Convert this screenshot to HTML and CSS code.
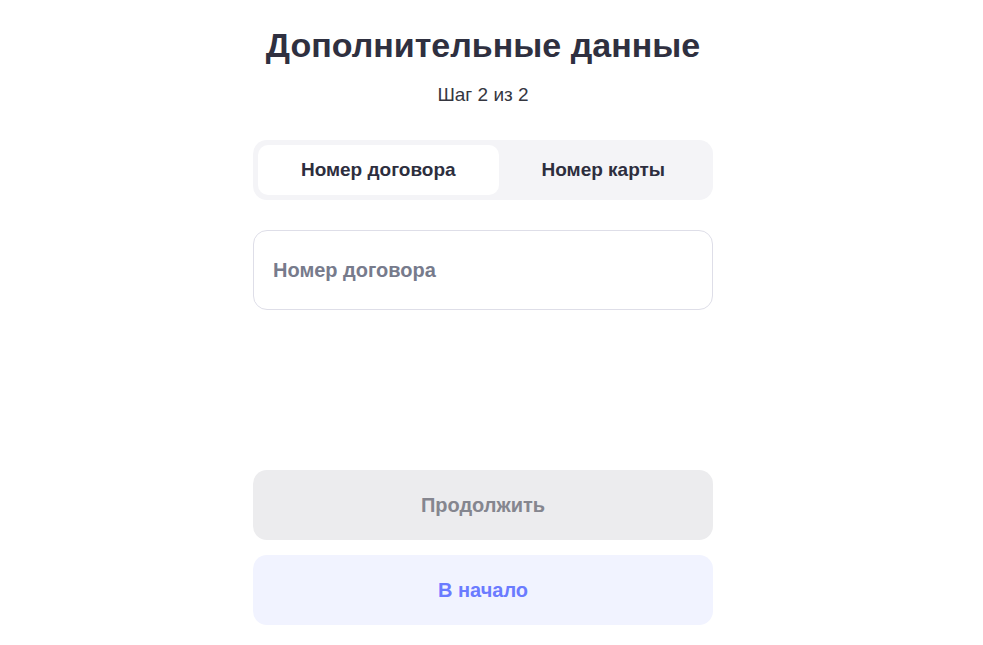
FILE: index.html
```html
<!DOCTYPE html>
<html lang="ru">
<head>
<meta charset="utf-8">
<title>Дополнительные данные</title>
<link rel="stylesheet" href="styles.css">
</head>
<body>
<div class="page">
  <main class="form">
    <h1 class="title">Дополнительные данные</h1>
    <p class="step">Шаг 2 из 2</p>
    <div class="tabs">
      <button class="tab tab-active">Номер договора</button>
      <button class="tab">Номер карты</button>
    </div>
    <input class="field" type="text" placeholder="Номер договора">
    <div class="spacer"></div>
    <button class="btn btn-primary" disabled>Продолжить</button>
    <button class="btn btn-secondary">В начало</button>
  </main>
</div>
</body>
</html>
```
FILE: styles.css
```css
html, body {
  margin: 0;
  padding: 0;
  background: #ffffff;
  font-family: "Liberation Sans", Arial, sans-serif;
}
.page {
  width: 966px;
}
.form {
  width: 460px;
  margin: 0 auto;
  display: flex;
  flex-direction: column;
  padding-top: 25px;
}
.title {
  margin: 0;
  font-size: 34px;
  line-height: 40px;
  font-weight: 700;
  color: #2f3040;
  text-align: center;
}
.step {
  margin: 18px 0 0;
  font-size: 19px;
  line-height: 24px;
  color: #35363f;
  text-align: center;
}
.tabs {
  margin-top: 33px;
  height: 60px;
  box-sizing: border-box;
  padding: 5px;
  background: #f4f4f7;
  border-radius: 14px;
  display: flex;
}
.tab {
  flex: 1 1 auto;
  border: 0;
  background: transparent;
  border-radius: 10px;
  font-family: inherit;
  font-size: 19px;
  font-weight: 700;
  color: #2d2e3e;
  cursor: pointer;
  padding: 0 38px;
}
.tab-active {
  background: #ffffff;
}
.field {
  margin-top: 30px;
  height: 80px;
  box-sizing: border-box;
  border: 1px solid #dedee8;
  border-radius: 14px;
  padding: 0 19px;
  font-family: inherit;
  font-size: 20px;
  font-weight: 700;
  color: #2e2f3e;
  outline: none;
}
.field::placeholder {
  color: #777b8c;
  opacity: 1;
}
.spacer {
  height: 160px;
}
.btn {
  height: 70px;
  border: 0;
  border-radius: 14px;
  font-family: inherit;
  font-size: 20px;
  font-weight: 700;
  padding: 0;
  cursor: pointer;
}
.btn-primary {
  background: #ececee;
  color: #85868f;
}
.btn-secondary {
  margin-top: 15px;
  background: #f1f3ff;
  color: #6b7bff;
}
```
